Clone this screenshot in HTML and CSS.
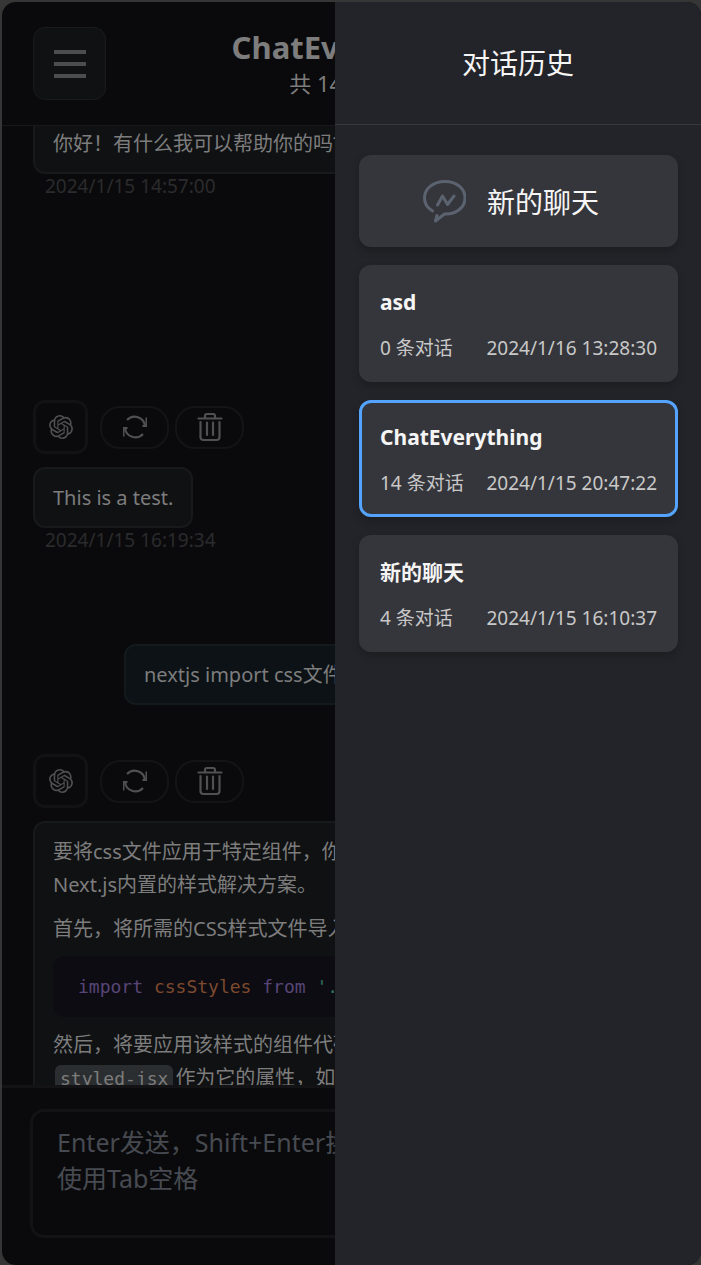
FILE: index.html
```html
<!DOCTYPE html>
<html lang="zh-CN">
<head>
<meta charset="utf-8">
<meta name="viewport" content="width=device-width, initial-scale=1">
<title>ChatEverything</title>
<link rel="stylesheet" href="styles.css">
</head>
<body>
<svg class="sprite" aria-hidden="true">
  <symbol id="i-openai" viewBox="0 0 24 24"><path fill="currentColor" d="M22.2819 9.8211a5.9847 5.9847 0 0 0-.5157-4.9108 6.0462 6.0462 0 0 0-6.5098-2.9A6.0651 6.0651 0 0 0 4.9807 4.1818a5.9847 5.9847 0 0 0-3.9977 2.9 6.0462 6.0462 0 0 0 .7427 7.0966 5.98 5.98 0 0 0 .511 4.9107 6.051 6.051 0 0 0 6.5146 2.9001A5.9847 5.9847 0 0 0 13.2599 24a6.0557 6.0557 0 0 0 5.7718-4.2058 5.9894 5.9894 0 0 0 3.9977-2.9001 6.0557 6.0557 0 0 0-.7475-7.0729zm-9.022 12.6081a4.4755 4.4755 0 0 1-2.8764-1.0408l.1419-.0804 4.7783-2.7582a.7948.7948 0 0 0 .3927-.6813v-6.7369l2.02 1.1686a.071.071 0 0 1 .038.052v5.5826a4.504 4.504 0 0 1-4.4945 4.4944zm-9.6607-4.1254a4.4708 4.4708 0 0 1-.5346-3.0137l.142.0852 4.783 2.7582a.7712.7712 0 0 0 .7806 0l5.8428-3.3685v2.3324a.0804.0804 0 0 1-.0332.0615L9.74 19.9502a4.4992 4.4992 0 0 1-6.1408-1.6464zM2.3408 7.8956a4.485 4.485 0 0 1 2.3655-1.9728V11.6a.7664.7664 0 0 0 .3879.6765l5.8144 3.3543-2.0201 1.1685a.0757.0757 0 0 1-.071 0l-4.8303-2.7865A4.504 4.504 0 0 1 2.3408 7.872zm16.5963 3.8558L13.1038 8.364 15.1192 7.2a.0757.0757 0 0 1 .071 0l4.8303 2.7913a4.4944 4.4944 0 0 1-.6765 8.1042v-5.6772a.79.79 0 0 0-.407-.667zm2.0107-3.0231l-.142-.0852-4.7735-2.7818a.7759.7759 0 0 0-.7854 0L9.409 9.2297V6.8974a.0662.0662 0 0 1 .0284-.0615l4.8303-2.7866a4.4992 4.4992 0 0 1 6.6802 4.66zM8.3065 12.863l-2.02-1.1638a.0804.0804 0 0 1-.038-.0567V6.0742a4.4992 4.4992 0 0 1 7.3757-3.4537l-.142.0805L8.704 5.459a.7948.7948 0 0 0-.3927.6813zm1.0976-2.3654l2.602-1.4998 2.6069 1.4998v2.9994l-2.5974 1.4997-2.6067-1.4997Z"/></symbol>
  <symbol id="i-refresh" viewBox="0 0 26 26"><path fill="none" stroke="currentColor" stroke-width="2.2" d="M5 6A10.400 10.400 0 0 1 23 12M21 20A10.400 10.400 0 0 1 3 14"/><path fill="currentColor" d="M23.500 3.500H25V13h-4.500v-2h3zM2.500 22.500H1V13h4.500v2h-3z"/></symbol>
  <symbol id="i-trash" viewBox="0 0 26 30"><path fill="none" stroke="currentColor" stroke-width="2.200" stroke-linecap="round" stroke-linejoin="round" d="M1.500 6.500h23M8 6V4q0-2 2-2h6q2 0 2 2v2M3.500 10v15q0 3 3 3h13q3 0 3-3V10M10 10.500v12.500M16 10.500v12.500"/></symbol>
</svg>
<div class="app">
  <header class="topbar">
    <button class="menu" type="button" aria-label="菜单"><svg viewBox="0 0 32 28" aria-hidden="true"><path fill="currentColor" d="M0 0h32v4H0zM0 12h32v4H0zM0 24h32v4H0z"/></svg></button>
    <div class="heading">
      <h1>ChatEverything</h1>
      <p>共 14 条对话</p>
    </div>
  </header>

  <main class="messages">
    <div class="thread">
      <article class="message">
        <div class="tools"></div>
        <div class="bubble wide"><p>你好！有什么我可以帮助你的吗?</p></div>
        <time>2024/1/15 14:57:00</time>
      </article>
      <article class="message mine">
        <div class="tools"></div>
        <div class="bubble"></div>
      </article>
      <article class="message">
        <div class="tools">
          <span class="avatar"><svg aria-hidden="true"><use href="#i-openai"/></svg></span>
          <button type="button" aria-label="重试"><svg class="refresh" aria-hidden="true"><use href="#i-refresh"/></svg></button>
          <button type="button" aria-label="删除"><svg class="trash" aria-hidden="true"><use href="#i-trash"/></svg></button>
        </div>
        <div class="bubble"><p>This is a test.</p></div>
        <time>2024/1/15 16:19:34</time>
      </article>
      <article class="message mine">
        <div class="tools"></div>
        <div class="bubble wide"><p>nextjs import css文件</p></div>
      </article>
      <article class="message">
        <div class="tools">
          <span class="avatar"><svg aria-hidden="true"><use href="#i-openai"/></svg></span>
          <button type="button" aria-label="重试"><svg class="refresh" aria-hidden="true"><use href="#i-refresh"/></svg></button>
          <button type="button" aria-label="删除"><svg class="trash" aria-hidden="true"><use href="#i-trash"/></svg></button>
        </div>
        <div class="bubble wide">
          <p>要将css文件应用于特定组件，你<br>Next.js内置的样式解决方案。</p>
          <p>首先，将所需的CSS样式文件导入</p>
          <pre><code><span class="kw">import</span> <span class="id">cssStyles</span> <span class="kw">from</span> <span class="str">'.</span></code></pre>
          <p>然后，将要应用该样式的组件代码<br><code class="inline">styled-jsx</code>作为它的属性，如下</p>
        </div>
      </article>
    </div>
  </main>

  <footer class="composer">
    <textarea aria-label="消息" placeholder="Enter发送，Shift+Enter换行，&#10;使用Tab空格"></textarea>
  </footer>

  <aside class="drawer">
    <h2>对话历史</h2>
    <div class="history">
      <button class="new-chat" type="button">
        <svg viewBox="0 0 44 44" aria-hidden="true"><path fill="none" stroke="currentColor" stroke-width="3" stroke-linecap="round" stroke-linejoin="round" d="M10.500 32C5.500 29 2.500 24.500 2.500 19C2.500 9.500 11.500 2.500 23 2.500S43 9.500 43 19S34 35.500 22.500 35L13.500 42L15 36.500M15.500 26L20.500 17L25.500 25.500L32 17"/></svg>
        <span>新的聊天</span>
      </button>
      <button class="chat" type="button">
        <strong>asd</strong>
        <span class="meta"><span>0 条对话</span><time>2024/1/16 13:28:30</time></span>
      </button>
      <button class="chat active" type="button">
        <strong>ChatEverything</strong>
        <span class="meta"><span>14 条对话</span><time>2024/1/15 20:47:22</time></span>
      </button>
      <button class="chat" type="button">
        <strong>新的聊天</strong>
        <span class="meta"><span>4 条对话</span><time>2024/1/15 16:10:37</time></span>
      </button>
    </div>
  </aside>
</div>
</body>
</html>
```
FILE: styles.css
```css
* { box-sizing: border-box; }
html, body { height: 100%; }
body {
  margin: 0;
  padding: 2px 0 0 2px;
  background: #363636;
  font-family: "Noto Sans", "Noto Sans CJK SC", sans-serif;
}
h1, h2, p, pre { margin: 0; }
button, textarea { font: inherit; color: inherit; }
svg { display: block; }
.sprite { display: none; }

.app {
  position: relative;
  display: flex;
  flex-direction: column;
  height: 100%;
  overflow: hidden;
  border-radius: 14px;
  background: #0a0a0c;
  color: #7d7d7d;
}

.topbar {
  display: grid;
  grid-template-columns: 73px 1fr 73px;
  padding: 25px 31px;
  border-bottom: 1px solid #18181a;
}
.menu {
  display: grid;
  place-items: center;
  height: 73px;
  padding: 0;
  border: 1px solid #1a1b1d;
  border-radius: 12px;
  background: #101113;
  color: #4d4d4d;
}
.menu svg { width: 32px; height: 28px; }
.heading { text-align: center; }
.heading h1 { font-size: 31px; line-height: 40px; }
.heading p { font-size: 22px; line-height: 32px; }

.messages { flex: 1; min-height: 0; overflow: hidden; }
/* Scroll position of the thread */
.thread {
  display: flex;
  flex-direction: column;
  gap: 25px;
  margin-top: -80px;
  padding: 0 31px;
}
.message {
  display: flex;
  flex-direction: column;
  align-items: flex-start;
  min-height: 152px;
}
.mine { align-items: flex-end; }
.tools {
  display: flex;
  align-items: center;
  gap: 6px;
  height: 54px;
  margin-bottom: 13px;
  color: #505050;
}
.avatar {
  display: grid;
  place-items: center;
  width: 55px;
  height: 54px;
  margin-right: 6px;
  border: 3px solid #121214;
  border-radius: 12px;
}
.avatar svg { width: 24px; height: 24px; }
.tools button {
  display: grid;
  place-items: center;
  width: 69px;
  height: 43px;
  padding: 0;
  border: 2px solid #141416;
  border-radius: 20px;
  background: none;
}
.refresh { width: 26px; height: 26px; }
.trash { width: 26px; height: 30px; }
.bubble {
  display: flex;
  flex-direction: column;
  gap: 11px;
  min-height: 61px;
  padding: 12px 18px;
  border: 2px solid #18191b;
  border-radius: 12px;
  background: #101113;
  font-size: 20px;
  line-height: 33px;
}
.wide { width: 100%; }
.mine .bubble { border-color: #131a1c; background: #0c1215; }
.mine .wide { width: calc(100% - 91px); }
.message time {
  padding-left: 12px;
  color: #2b2b2d;
  font-size: 19px;
  line-height: 24px;
}
pre {
  padding: 14px 25px;
  border-radius: 12px;
  background: #0d0c12;
}
code { font: 18px/33px "DejaVu Sans Mono", monospace; }
pre code { display: block; }
.kw { color: #584577; }
.id { color: #7d4a2e; }
.str { color: #33705f; }
.inline {
  margin: 0 2px;
  padding: 3px 5px;
  border-radius: 6px;
  background: #2b2e30;
}

.composer { padding: 21px 28px 27px; border-top: 3px solid #131315; }
textarea {
  display: block;
  width: 100%;
  height: 129px;
  padding: 12px 24px;
  border: 3px solid #131315;
  border-radius: 14px;
  background: none;
  font-size: 25px;
  line-height: 36px;
  resize: none;
}
textarea::placeholder { color: #474a51; }

.drawer {
  position: absolute;
  inset: 0 0 0 auto;
  width: 366px;
  background: #232429;
  color: #f5f5f5;
}
.drawer h2 {
  padding: 40px 0;
  border-bottom: 1px solid #38393d;
  font-size: 28px;
  font-weight: 400;
  line-height: 42px;
  text-align: center;
}
.history {
  display: flex;
  flex-direction: column;
  gap: 18px;
  padding: 30px 23px 30px 24px;
}
.history button {
  border: 3px solid transparent;
  border-radius: 12px;
  background: #35363b;
  box-shadow: 0 4px 8px rgba(0, 0, 0, 0.2);
}
.history .new-chat {
  display: flex;
  align-items: center;
  justify-content: center;
  gap: 21px;
  min-height: 92px;
  padding: 0 16px 0 0;
  font-size: 28px;
}
.new-chat svg { width: 44px; height: 44px; color: #5c6370; }
.chat {
  display: flex;
  flex-direction: column;
  gap: 14px;
  padding: 16px 18px 17px;
  text-align: left;
}
.history .active { border-color: #54a4ff; }
.chat strong { font-size: 21px; line-height: 36px; }
.meta {
  display: flex;
  justify-content: space-between;
  width: 100%;
  color: #c8c8c8;
  font-size: 19px;
  line-height: 28px;
}
```
